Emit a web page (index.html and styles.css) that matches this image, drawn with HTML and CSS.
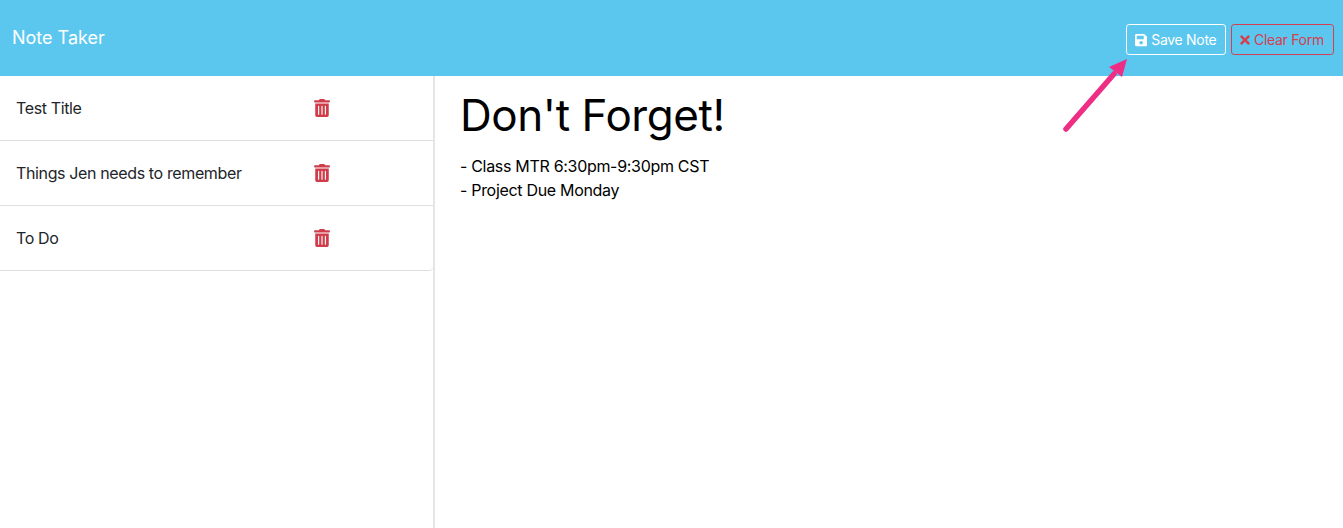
FILE: index.html
```html
<!DOCTYPE html>
<html lang="en">
<head>
<meta charset="utf-8">
<title>Note Taker</title>
<link rel="stylesheet" href="styles.css">
</head>
<body>
<nav class="navbar">
  <a class="brand">Note Taker</a>
  <div class="actions">
    <button class="btn btn-save"><svg class="icon" viewBox="0 0 448 512"><path d="M433.941 129.941l-83.882-83.882A48 48 0 0 0 316.118 32H48C21.49 32 0 53.49 0 80v352c0 26.51 21.49 48 48 48h352c26.51 0 48-21.49 48-48V163.882a48 48 0 0 0-14.059-33.941zM224 416c-35.346 0-64-28.654-64-64 0-35.346 28.654-64 64-64s64 28.654 64 64c0 35.346-28.654 64-64 64zm96-304.52V212c0 6.627-5.373 12-12 12H76c-6.627 0-12-5.373-12-12V108c0-6.627 5.373-12 12-12h228.52c3.183 0 6.235 1.264 8.485 3.515l3.48 3.48A11.996 11.996 0 0 1 320 111.48z"/></svg>Save Note</button>
    <button class="btn btn-clear"><svg class="icon icon-times" viewBox="0 0 352 512"><path d="M242.72 256l100.07-100.07c12.28-12.28 12.28-32.19 0-44.48l-22.24-22.24c-12.28-12.28-32.19-12.28-44.48 0L176 189.28 75.93 89.21c-12.28-12.28-32.19-12.28-44.48 0L9.21 111.45c-12.28 12.28-12.28 32.19 0 44.48L109.28 256 9.21 356.07c-12.28 12.28-12.28 32.19 0 44.48l22.24 22.24c12.28 12.28 32.2 12.28 44.48 0L176 322.72l100.07 100.07c12.28 12.28 32.2 12.28 44.48 0l22.24-22.24c12.28-12.28 12.28-32.19 0-44.48L242.72 256z"/></svg>Clear Form</button>
  </div>
</nav>
<main class="layout">
  <aside class="sidebar">
    <ul class="note-list">
      <li class="note-item"><span>Test Title</span><svg class="trash" viewBox="0 0 448 512"><path d="M32 464a48 48 0 0 0 48 48h288a48 48 0 0 0 48-48V128H32zm272-256a16 16 0 0 1 32 0v224a16 16 0 0 1-32 0zm-96 0a16 16 0 0 1 32 0v224a16 16 0 0 1-32 0zm-96 0a16 16 0 0 1 32 0v224a16 16 0 0 1-32 0zM432 32H312l-9.4-18.7A24 24 0 0 0 281.1 0H166.8a23.72 23.72 0 0 0-21.4 13.3L136 32H16A16 16 0 0 0 0 48v32a16 16 0 0 0 16 16h416a16 16 0 0 0 16-16V48a16 16 0 0 0-16-16z"/></svg></li>
      <li class="note-item"><span>Things Jen needs to remember</span><svg class="trash" viewBox="0 0 448 512"><path d="M32 464a48 48 0 0 0 48 48h288a48 48 0 0 0 48-48V128H32zm272-256a16 16 0 0 1 32 0v224a16 16 0 0 1-32 0zm-96 0a16 16 0 0 1 32 0v224a16 16 0 0 1-32 0zm-96 0a16 16 0 0 1 32 0v224a16 16 0 0 1-32 0zM432 32H312l-9.4-18.7A24 24 0 0 0 281.1 0H166.8a23.72 23.72 0 0 0-21.4 13.3L136 32H16A16 16 0 0 0 0 48v32a16 16 0 0 0 16 16h416a16 16 0 0 0 16-16V48a16 16 0 0 0-16-16z"/></svg></li>
      <li class="note-item"><span>To Do</span><svg class="trash" viewBox="0 0 448 512"><path d="M32 464a48 48 0 0 0 48 48h288a48 48 0 0 0 48-48V128H32zm272-256a16 16 0 0 1 32 0v224a16 16 0 0 1-32 0zm-96 0a16 16 0 0 1 32 0v224a16 16 0 0 1-32 0zm-96 0a16 16 0 0 1 32 0v224a16 16 0 0 1-32 0zM432 32H312l-9.4-18.7A24 24 0 0 0 281.1 0H166.8a23.72 23.72 0 0 0-21.4 13.3L136 32H16A16 16 0 0 0 0 48v32a16 16 0 0 0 16 16h416a16 16 0 0 0 16-16V48a16 16 0 0 0-16-16z"/></svg></li>
    </ul>
  </aside>
  <section class="note">
    <h1 class="note-title">Don't Forget!</h1>
    <p class="note-text">- Class MTR 6:30pm-9:30pm CST<br>- Project Due Monday</p>
  </section>
</main>
<svg class="arrow" viewBox="0 0 80 90" aria-hidden="true">
  <path class="arrow-line" d="M5 71 L53 16"/>
  <path class="arrow-head" d="M66 1 L61 19 L48 9 Z"/>
</svg>
</body>
</html>
```

FILE: styles.css
```css
* { box-sizing: border-box; }
html, body { height: 100%; }
body {
  margin: 0;
  display: flex;
  flex-direction: column;
  height: 528px;
  overflow: hidden;
  font-family: Inter, "Liberation Sans", sans-serif;
  font-size: 16px;
  color: #212529;
  background: #fff;
  position: relative;
}
.navbar {
  flex: 0 0 76px;
  display: flex;
  align-items: center;
  justify-content: space-between;
  padding: 0 9px 0 12px;
  background: #5bc7ef;
}
.brand { font-size: 18px; line-height: 28px; color: #fff; margin-top: -1px; }
.actions { display: flex; gap: 5px; margin-top: 3px; }
.btn {
  display: flex;
  align-items: center;
  white-space: nowrap;
  height: 31px;
  padding: 0 8px;
  font: 14px/21px Inter, "Liberation Sans", sans-serif;
  letter-spacing: -0.3px;
  background: transparent;
  border: 1px solid;
  border-radius: 3.2px;
}
.btn-save { color: #fff; border-color: #fff; width: 100px; }
.btn-clear { color: #d4404f; border-color: #d4404f; width: 103px; }
.icon { flex: none; width: 12.25px; height: 14px; fill: currentColor; margin-right: 4px; }
.icon-times { width: 10px; margin-right: 4px; }
.layout { flex: 1; display: flex; min-height: 0; }
.sidebar { flex: 0 0 435px; border-right: 2px solid #e5e5e5; }
.note-list { list-style: none; margin: 0; padding: 0; }
.note-item {
  height: 65px;
  display: grid;
  grid-template-columns: 298px 16px;
  align-items: center;
  padding: 0 0 1px 16px;
  border-bottom: 1px solid #dfdfdf;
  font-size: 16px;
  letter-spacing: -0.37px;
}
.note-item:last-child { border-bottom-right-radius: 4px; }
.trash { width: 16px; height: 18px; fill: #cf3d4b; }
.note { flex: 1; padding: 11px 25px; color: #000; }
.note-title { margin: 0; font-size: 44px; line-height: 56px; font-weight: 400; letter-spacing: -0.42px; }
.note-text { margin: 11px 0 0; font-size: 16px; line-height: 24px; letter-spacing: -0.31px; }
.arrow { position: absolute; left: 1061px; top: 58px; width: 80px; height: 90px; }
.arrow-line { fill: none; stroke: #ee2e85; stroke-width: 5.5; stroke-linecap: round; }
.arrow-head { fill: #ee2e85; }
```
